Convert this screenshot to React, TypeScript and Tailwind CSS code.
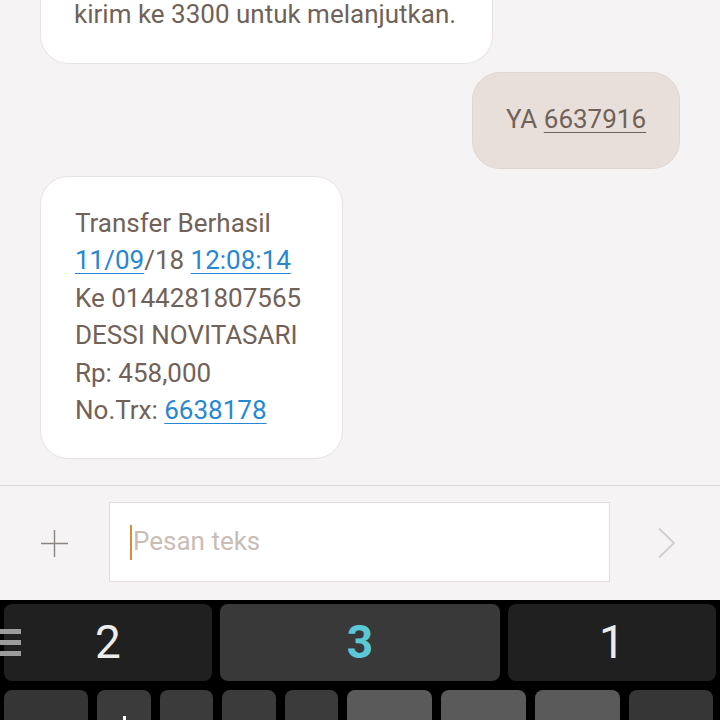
import React from "react";

const font = { fontFamily: "Roboto, 'Noto Sans', sans-serif" };

function Link({ children }: { children: React.ReactNode }) {
  return <span className="text-[#2787d2] underline decoration-1 underline-offset-[4px]">{children}</span>;
}

const bottomKeys = [
  { w: "w-[84px]", c: "bg-[#353535]" },
  { w: "w-[54px]", c: "bg-[#3b3b3b]", mark: true },
  { w: "w-[53px]", c: "bg-[#3b3b3b]" },
  { w: "w-[54px]", c: "bg-[#3b3b3b]" },
  { w: "w-[53px]", c: "bg-[#3b3b3b]" },
  { w: "w-[85px]", c: "bg-[#5a5a5a]" },
  { w: "w-[85px]", c: "bg-[#5a5a5a]" },
  { w: "w-[85px]", c: "bg-[#5a5a5a]" },
  { w: "w-[84px]", c: "bg-[#363636]" },
];

export default function App() {
  return (
    <div
      className="w-[720px] h-[720px] overflow-hidden flex flex-col bg-[#f5f3f3] text-[26px] leading-[37.5px] text-[#716259]"
      style={font}
    >
      {/* conversation */}
      <div className="h-[485px] shrink-0 flex flex-col">
        <div className="ml-[40px] mt-[-4px] w-[453px] rounded-b-[28px] bg-white border border-t-0 border-[#e7e3e1] pl-[33px] pb-[29px]">
          kirim ke 3300 untuk melanjutkan.
        </div>

        <div className="self-end mr-[40px] mt-[8px] w-[208px] h-[97px] rounded-[28px] bg-[#e8dfda] border border-[#e0d6d1] flex items-center justify-center">
          <span>
            YA <span className="underline decoration-1 underline-offset-[4px]">6637916</span>
          </span>
        </div>

        <div className="ml-[40px] mt-[7px] w-[303px] rounded-[28px] bg-white border border-[#e7e3e1] pl-[34px] py-[28px]">
          <div>Transfer Berhasil</div>
          <div>
            <Link>11/09</Link>/18 <Link>12:08:14</Link>
          </div>
          <div>Ke 0144281807565</div>
          <div>DESSI NOVITASARI</div>
          <div>Rp: 458,000</div>
          <div>
            No.Trx: <Link>6638178</Link>
          </div>
        </div>
      </div>

      {/* compose bar */}
      <div className="h-[115px] shrink-0 border-t border-[#dedad8] flex items-center">
        <div className="w-[109px] flex justify-center">
          <svg width="29" height="29" viewBox="0 0 29 29">
            <path d="M14.5 1v27M1 14.5h27" stroke="#8c8482" strokeWidth="1.4" />
          </svg>
        </div>
        <div className="w-[501px] h-[80px] mt-[-2px] bg-white border border-[#e2dedc] flex items-center pl-[20px]">
          <span className="w-[2px] h-[35px] bg-[#dc8a3e]" />
          <span className="ml-[1px] text-[#c9bdb6]">Pesan teks</span>
        </div>
        <div className="flex-1 flex justify-center">
          <svg width="20" height="32" viewBox="0 0 20 32" className="ml-[4px]">
            <path d="M2 1.5 17 16 2 30.5" fill="none" stroke="#cfcfcf" strokeWidth="1.8" />
          </svg>
        </div>
      </div>

      {/* keyboard */}
      <div className="h-[120px] shrink-0 overflow-hidden bg-black px-[4px] pt-[4px] relative">
        <div className="flex gap-[8px] h-[77px]">
          <div className="w-[208px] rounded-[8px] bg-[#202020] flex items-center justify-center text-[46px] text-[#ececec]">
            2
          </div>
          <div className="w-[280px] rounded-[8px] bg-[#393939] flex items-center justify-center text-[46px] font-bold text-[#5cc7d7]">
            3
          </div>
          <div className="w-[208px] rounded-[8px] bg-[#202020] flex items-center justify-center text-[46px] text-[#ececec]">
            1
          </div>
        </div>
        <div className="absolute left-0 top-[29px] w-[21px] flex flex-col gap-[6px]">
          <span className="h-[5px] bg-[#9c9c9c]" />
          <span className="h-[5px] bg-[#9c9c9c]" />
          <span className="h-[5px] bg-[#9c9c9c]" />
        </div>
        <div className="flex gap-[9px] mt-[9px] h-[40px]">
          {bottomKeys.map((k, i) => (
            <div key={i} className={`${k.w} ${k.c} rounded-[8px] flex justify-center`}>
              {k.mark && <span className="mt-[26px] w-[3px] h-[6px] bg-white" />}
            </div>
          ))}
        </div>
      </div>
    </div>
  );
}
